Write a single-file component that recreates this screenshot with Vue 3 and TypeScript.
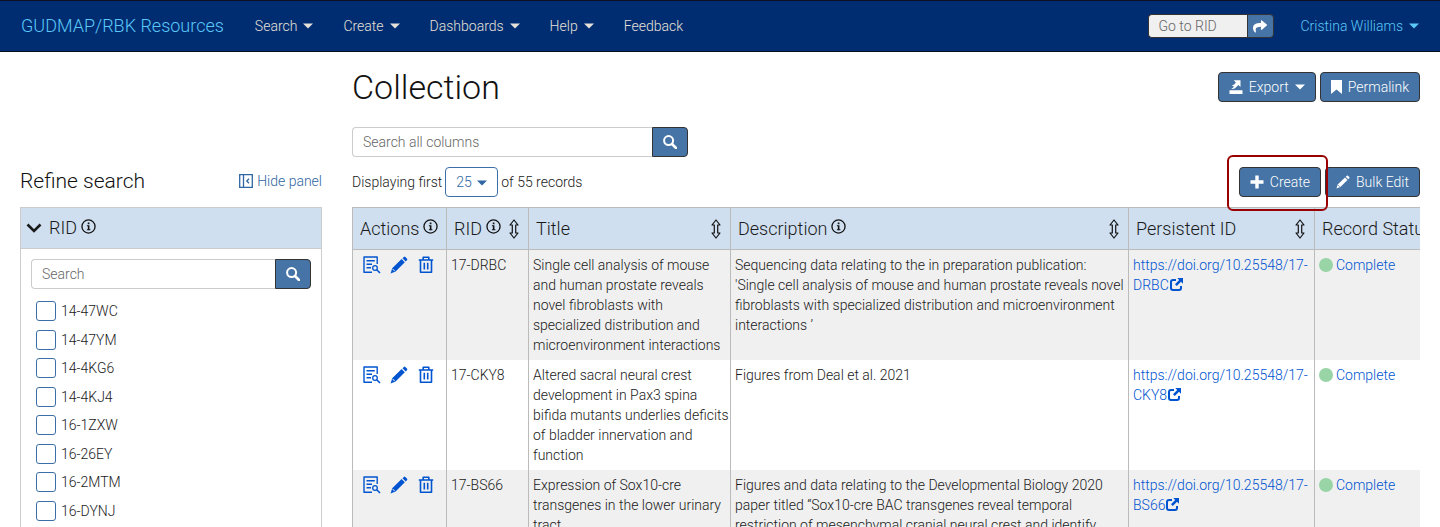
<script setup lang="ts">
import { ref } from 'vue'

interface NavItem {
  label: string
  menu: boolean
}

interface Column {
  key: string
  label: string
  info: boolean
  sort: boolean
}

interface CollectionRow {
  rid: string
  title: string
  description: string
  doi: string
  status: string
}

const navItems: NavItem[] = [
  { label: 'Search', menu: true },
  { label: 'Create', menu: true },
  { label: 'Dashboards', menu: true },
  { label: 'Help', menu: true },
  { label: 'Feedback', menu: false },
]

const columns: Column[] = [
  { key: 'actions', label: 'Actions', info: true, sort: false },
  { key: 'rid', label: 'RID', info: true, sort: true },
  { key: 'title', label: 'Title', info: false, sort: true },
  { key: 'description', label: 'Description', info: true, sort: true },
  { key: 'pid', label: 'Persistent ID', info: false, sort: true },
  { key: 'status', label: 'Record Status', info: false, sort: false },
]

const rows: CollectionRow[] = [
  {
    rid: '17-DRBC',
    title:
      'Single cell analysis of mouse and human prostate reveals novel fibroblasts with specialized distribution and microenvironment interactions',
    description:
      "Sequencing data relating to the in preparation publication: 'Single cell analysis of mouse and human prostate reveals novel fibroblasts with specialized distribution and microenvironment interactions ’",
    doi: 'https://doi.org/10.25548/17-DRBC',
    status: 'Complete',
  },
  {
    rid: '17-CKY8',
    title:
      'Altered sacral neural crest development in Pax3 spina bifida mutants underlies deficits of bladder innervation and function',
    description: 'Figures from Deal et al. 2021',
    doi: 'https://doi.org/10.25548/17-CKY8',
    status: 'Complete',
  },
  {
    rid: '17-BS66',
    title: 'Expression of Sox10-cre transgenes in the lower urinary tract',
    description:
      'Figures and data relating to the Developmental Biology 2020 paper titled “Sox10-cre BAC transgenes reveal temporal restriction of mesenchymal cranial neural crest and identify',
    doi: 'https://doi.org/10.25548/17-BS66',
    status: 'Complete',
  },
]

const facets: string[] = [
  '14-47WC',
  '14-47YM',
  '14-4KG6',
  '14-4KJ4',
  '16-1ZXW',
  '16-26EY',
  '16-2MTM',
  '16-DYNJ',
]

const selected = ref<string[]>([])
const pageSize = ref('25')
const gotoRid = ref('')
const facetQuery = ref('')
const query = ref('')
</script>

<template>
  <svg class="defs" aria-hidden="true">
    <symbol id="caret" viewBox="0 0 10 6"><path d="M0 0.5h10L5 5.5z" fill="currentColor" /></symbol>
    <symbol id="magnifier" viewBox="0 0 14 14">
      <circle cx="5.6" cy="5.6" r="4.5" fill="none" stroke="currentColor" stroke-width="2" />
      <path d="M9 9l4 4" stroke="currentColor" stroke-width="2.5" stroke-linecap="round" />
    </symbol>
    <symbol id="info" viewBox="0 0 16 16">
      <circle cx="8" cy="8" r="7" fill="none" stroke="currentColor" stroke-width="1.4" />
      <path d="M7.2 3.8h1.8v1.8H7.2zM6.3 6.7h2.7v4.3h1v1H6.3v-1h1V7.7h-1z" fill="currentColor" />
    </symbol>
    <symbol id="sort" viewBox="0 0 10 20">
      <path
        d="M5 1L9 6H6.7V14H9L5 19L1 14H3.3V6H1Z"
        fill="none"
        stroke="currentColor"
        stroke-width="1.2"
        stroke-linejoin="round"
      />
    </symbol>
    <symbol id="pencil" viewBox="0 0 18 18">
      <path
        d="M2.2 12.2L11.6 3.1l3.2 3.2L5.6 15.4L0.6 17.4ZM12.5 2.2l1.4-1.3q0.7-0.6 1.4 0l1.8 1.8q0.6 0.7 0 1.4L15.7 5.4Z"
        fill="currentColor"
      />
      <path d="M2.5 12.9l2.3 2.3" stroke="var(--cut)" stroke-width="1" />
    </symbol>
  </svg>

  <div class="page">
    <header class="navbar">
      <a class="brand" href="#">GUDMAP/RBK Resources</a>
      <nav class="nav">
        <template v-for="item in navItems" :key="item.label">
          <button v-if="item.menu" type="button" class="nav-item">
            {{ item.label }}<svg class="caret"><use href="#caret" /></svg>
          </button>
          <a v-else class="nav-item" href="#">{{ item.label }}</a>
        </template>
      </nav>
      <form class="goto" @submit.prevent>
        <input v-model="gotoRid" type="text" placeholder="Go to RID" aria-label="Go to RID" />
        <button type="submit" aria-label="Go">
          <svg class="share" viewBox="0 30 512 460">
            <path
              d="M503.691 189.836L327.687 37.851C312.281 24.546 288 35.347 288 56.015v80.053C127.371 137.907 0 170.1 0 322.326c0 61.441 39.581 122.309 83.333 154.132 13.653 9.931 33.111-2.533 28.077-18.631C66.066 312.814 132.917 274.316 288 272.085V360c0 20.7 24.3 31.453 39.687 18.164l176.004-152c11.071-9.562 11.086-26.753 0-36.328z"
              fill="currentColor"
            />
          </svg>
        </button>
      </form>
      <button type="button" class="nav-item user">
        Cristina Williams<svg class="caret"><use href="#caret" /></svg>
      </button>
    </header>

    <div class="body">
      <aside class="sidebar">
        <div class="side-head">
          <h2>Refine search</h2>
          <button type="button" class="hide-panel">
            <svg class="panel-icon" viewBox="0 0 14 14">
              <path
                d="M0.7 0.7H13.3V13.3H0.7ZM4.5 0.7V13.3M10 4.8L7.8 7L10 9.2"
                fill="none"
                stroke="currentColor"
                stroke-width="1.3"
              />
            </svg>
            Hide panel
          </button>
        </div>
        <section class="facet">
          <h3 class="facet-head">
            <svg class="chevron" viewBox="0 0 16 10">
              <path d="M1.5 1.5L8 8L14.5 1.5" fill="none" stroke="currentColor" stroke-width="2.6" />
            </svg>
            RID
            <svg class="info"><use href="#info" /></svg>
          </h3>
          <form class="search" @submit.prevent>
            <input v-model="facetQuery" type="text" placeholder="Search" aria-label="Search RID" />
            <button type="submit" aria-label="Search"><svg class="mag"><use href="#magnifier" /></svg></button>
          </form>
          <ul class="choices">
            <li v-for="facet in facets" :key="facet">
              <label><input v-model="selected" type="checkbox" :value="facet" />{{ facet }}</label>
            </li>
          </ul>
        </section>
      </aside>

      <main class="main">
        <div class="title-row">
          <h1>Collection</h1>
          <div class="buttons">
            <button type="button" class="btn">
              <svg class="ico" viewBox="0 0 14 14">
                <path
                  d="M0.5 10.3H13.5V14H0.5ZM4.8 0.3H11.5V7L9.4 4.9L6 8.3Q4 9.4 2.3 8.6Q4.5 7.8 5 6.2Q3.5 6.4 3 5.6Q5.5 4.8 6.9 2.4Z"
                  fill="currentColor"
                />
              </svg>
              Export
              <svg class="caret"><use href="#caret" /></svg>
            </button>
            <button type="button" class="btn">
              <svg class="bookmark" viewBox="0 0 11 14"><path d="M0 0H11V14L5.5 9.5L0 14Z" fill="currentColor" /></svg>
              Permalink
            </button>
          </div>
        </div>

        <form class="search search-main" @submit.prevent>
          <input v-model="query" type="text" placeholder="Search all columns" aria-label="Search all columns" />
          <button type="submit" aria-label="Search"><svg class="mag"><use href="#magnifier" /></svg></button>
        </form>

        <div class="count-row">
          <span>Displaying first</span>
          <span class="select">
            <select v-model="pageSize" aria-label="Records per page">
              <option>10</option>
              <option>25</option>
              <option>50</option>
            </select>
            <svg class="caret"><use href="#caret" /></svg>
          </span>
          <span>of 55 records</span>
          <div class="buttons">
            <div class="highlight">
              <button type="button" class="btn">
                <svg class="ico" viewBox="0 0 14 14">
                  <path d="M5.3 0.5h3.4v4.8h4.8v3.4H8.7v4.8H5.3V8.7H0.5V5.3h4.8z" fill="currentColor" />
                </svg>
                Create
              </button>
            </div>
            <button type="button" class="btn">
              <svg class="ico"><use href="#pencil" /></svg>
              Bulk Edit
            </button>
          </div>
        </div>

        <div class="table-wrap">
          <table>
            <colgroup>
              <col v-for="col in columns" :key="col.key" :class="`col-${col.key}`" />
            </colgroup>
            <thead>
              <tr>
                <th v-for="col in columns" :key="col.key" scope="col">
                  <div class="th">
                    <span>{{ col.label }}</span>
                    <svg v-if="col.info" class="info"><use href="#info" /></svg>
                    <svg v-if="col.sort" class="sort"><use href="#sort" /></svg>
                  </div>
                </th>
              </tr>
            </thead>
            <tbody>
              <tr v-for="row in rows" :key="row.rid">
                <td>
                  <div class="actions">
                    <a href="#" aria-label="View">
                      <svg class="act" viewBox="0 0 18 18">
                        <path
                          d="M14.2 8V1H1V16.3H9M3.5 4.7H11.8M3.5 8.2H9M3.5 11.7H8"
                          fill="none"
                          stroke="currentColor"
                          stroke-width="1.4"
                          stroke-linejoin="round"
                        />
                        <circle cx="12" cy="12" r="2.3" fill="none" stroke="currentColor" stroke-width="1.3" />
                        <path d="M13.7 13.7L17 17" stroke="currentColor" stroke-width="1.6" />
                      </svg>
                    </a>
                    <a href="#" aria-label="Edit"><svg class="act"><use href="#pencil" /></svg></a>
                    <a href="#" aria-label="Delete">
                      <svg class="act" viewBox="0 0 18 18">
                        <path
                          d="M1.8 4H16.2M3.5 4V16.2H14.5V4M6.2 3.7V1.2H11.8V3.7M7.3 6.8V13.5M10.7 6.8V13.5"
                          fill="none"
                          stroke="currentColor"
                          stroke-width="1.6"
                          stroke-linejoin="round"
                        />
                      </svg>
                    </a>
                  </div>
                </td>
                <td>{{ row.rid }}</td>
                <td class="title">{{ row.title }}</td>
                <td>{{ row.description }}</td>
                <td>
                  <a :href="row.doi"
                    >{{ row.doi
                    }}<svg class="ext" viewBox="0 0 13 13">
                      <path
                        d="M6 2H3Q1 2 1 4V10Q1 12 3 12H9Q11 12 11 10V8"
                        fill="none"
                        stroke="currentColor"
                        stroke-width="2"
                      />
                      <path d="M7.3 0H13V5.7L11 3.8L6.8 8L5 6.2L9.2 2Z" fill="currentColor" /></svg
                  ></a>
                </td>
                <td>
                  <a href="#" class="status"><span class="dot"></span>{{ row.status }}</a>
                </td>
              </tr>
            </tbody>
          </table>
        </div>
      </main>
    </div>
  </div>
</template>

<style>
body {
  margin: 0;
}
</style>

<style scoped>
.page {
  display: flex;
  flex-direction: column;
  height: 100vh;
  overflow: hidden;
  background: #fff;
  color: #1a1a1a;
  font: 300 14px/20px Roboto, 'Liberation Sans', sans-serif;
}
.defs {
  position: absolute;
  width: 0;
  height: 0;
}
svg {
  flex: none;
}
button,
input,
select {
  font: inherit;
  margin: 0;
  box-sizing: border-box;
}
button {
  cursor: pointer;
}
a {
  color: #0054d0;
  text-decoration: none;
}
h1,
h2,
h3 {
  margin: 0;
  font-weight: 300;
}
.caret {
  width: 10px;
  height: 6px;
}

.navbar {
  display: flex;
  align-items: center;
  flex: none;
  height: 52px;
  box-sizing: border-box;
  padding: 0 21px;
  border-top: 1px solid #0c1020;
  border-bottom: 1px solid #0a1020;
  background: #002d72;
}
.brand {
  color: #5bc8f8;
  font-size: 18px;
  margin-right: 31px;
}
.nav {
  display: flex;
  gap: 30px;
  flex: 1;
}
.nav-item {
  display: flex;
  align-items: center;
  gap: 6px;
  padding: 0;
  border: 0;
  background: none;
  color: #e6e0d8;
}
.nav-item.user {
  color: #5bc8f8;
}
.goto {
  display: flex;
  margin-right: 27px;
}
.goto input {
  width: 99px;
  height: 24px;
  padding: 0 10px;
  border: 1px solid #333;
  border-right: 0;
  border-radius: 4px 0 0 4px;
  background: #f0f0f0;
}
.goto button {
  display: flex;
  align-items: center;
  justify-content: center;
  width: 27px;
  height: 24px;
  padding: 0;
  border: 1px solid #333;
  border-radius: 0 4px 4px 0;
  background: #4674a7;
  color: #fff;
}
.share {
  width: 14px;
  height: 13px;
}
input::placeholder {
  color: #666;
  opacity: 1;
}

.body {
  display: flex;
  flex: 1;
  min-height: 0;
  gap: 30px;
  padding: 20px 20px 0;
}
.sidebar {
  display: flex;
  flex-direction: column;
  flex: none;
  width: 302px;
  padding-top: 94px;
}
.side-head {
  display: flex;
  align-items: center;
  justify-content: space-between;
  height: 30px;
  margin-bottom: 11px;
}
h2 {
  font-size: 21px;
  color: #111;
}
.hide-panel {
  display: flex;
  align-items: center;
  gap: 4px;
  padding: 0;
  border: 0;
  background: none;
  color: #2f66a3;
}
.panel-icon {
  width: 14px;
  height: 14px;
}
.facet {
  flex: 1;
  border: 1px solid #ccc;
  border-bottom: 0;
}
.facet-head {
  display: flex;
  align-items: center;
  height: 41px;
  padding-left: 5px;
  border-bottom: 1px solid #ccc;
  box-sizing: border-box;
  background: #cfdff0;
  font-size: 18px;
  color: #1a1a1a;
}
.chevron {
  width: 16px;
  height: 10px;
  margin-right: 7px;
}
.info {
  width: 15px;
  height: 15px;
  margin: 0 0 4px 4px;
  color: #111;
}
.search {
  display: flex;
  margin: 10px 10px 8px;
}
.search input {
  flex: 1;
  min-width: 0;
  height: 30px;
  padding: 0 10px;
  border: 1px solid #ccc;
  border-right: 0;
  border-radius: 4px 0 0 4px;
}
.search button {
  display: flex;
  align-items: center;
  justify-content: center;
  width: 36px;
  height: 30px;
  padding: 0;
  border: 1px solid #333;
  border-radius: 0 4px 4px 0;
  background: #4674a7;
  color: #fff;
}
.mag {
  width: 14px;
  height: 14px;
}
.choices {
  margin: 0;
  padding: 0 15px;
  list-style: none;
}
.choices label {
  display: flex;
  align-items: center;
  gap: 5px;
  height: 28px;
}
.choices li:nth-child(even) {
  padding-top: 1px;
}
.choices input {
  appearance: none;
  width: 20px;
  height: 20px;
  border: 1px solid #3c6fa8;
  border-radius: 3px;
}
.choices input:checked {
  background: #4674a7;
}

.main {
  flex: 1;
  min-width: 0;
}
.title-row,
.count-row {
  display: flex;
  align-items: center;
  height: 30px;
}
h1 {
  font-size: 34px;
  color: #111;
}
.buttons {
  display: flex;
  gap: 4px;
  margin-left: auto;
}
.btn {
  --cut: #4674a7;
  display: flex;
  align-items: center;
  gap: 6px;
  height: 30px;
  padding: 0 10px;
  border: 1px solid #333;
  border-radius: 4px;
  background: #4674a7;
  color: #fff;
}
.ico {
  width: 14px;
  height: 14px;
}
.bookmark {
  width: 11px;
  height: 14px;
}
.search-main {
  width: 336px;
  margin: 25px 0 10px;
}
.count-row {
  gap: 3px;
  margin-bottom: 10px;
}
.select {
  position: relative;
}
.select select {
  appearance: none;
  width: 53px;
  height: 30px;
  padding: 0 10px;
  border: 1px solid #3c6fa8;
  border-radius: 4px;
  background: #fff;
  color: #2f66a3;
}
.select .caret {
  position: absolute;
  top: 13px;
  right: 11px;
  color: #2f66a3;
  pointer-events: none;
}
.highlight {
  position: relative;
}
.highlight::after {
  content: '';
  position: absolute;
  inset: -12px -7px -14px -12px;
  border: 2px solid #990000;
  border-radius: 6px;
  z-index: 1;
  pointer-events: none;
}

.table-wrap {
  overflow: hidden;
}
table {
  width: 1092px;
  table-layout: fixed;
  border-collapse: separate;
  border-spacing: 0;
}
.col-actions {
  width: 94px;
}
.col-rid {
  width: 82px;
}
.col-title {
  width: 202px;
}
.col-description {
  width: 398px;
}
.col-pid {
  width: 186px;
}
.col-status {
  width: 130px;
}
th {
  padding: 0 9px 0 7px;
  border: 1px solid #bbb;
  border-right: 0;
  background: #cfdff0;
  font-weight: 300;
  font-size: 18px;
  text-align: left;
  white-space: nowrap;
}
.th {
  display: flex;
  align-items: center;
  height: 41px;
}
.sort {
  width: 10px;
  height: 20px;
  margin-left: auto;
  color: #111;
}
td {
  padding: 5px 3px 5px 4px;
  border-left: 1px solid #bbb;
  vertical-align: top;
}
td.title {
  padding-right: 0;
}
tbody tr:nth-child(odd) {
  --cut: #f0f0f0;
  background: #f0f0f0;
}
tbody tr:nth-child(even) {
  --cut: #fff;
}
.actions {
  display: flex;
  gap: 9px;
  padding: 1px 6px;
}
.act {
  display: block;
  width: 18px;
  height: 18px;
}
.ext {
  width: 13px;
  height: 13px;
  margin-left: 1px;
  vertical-align: -1px;
}
.status {
  display: flex;
  align-items: center;
  gap: 3px;
}
.dot {
  width: 14px;
  height: 14px;
  border-radius: 50%;
  background: #98d4a6;
}
</style>
